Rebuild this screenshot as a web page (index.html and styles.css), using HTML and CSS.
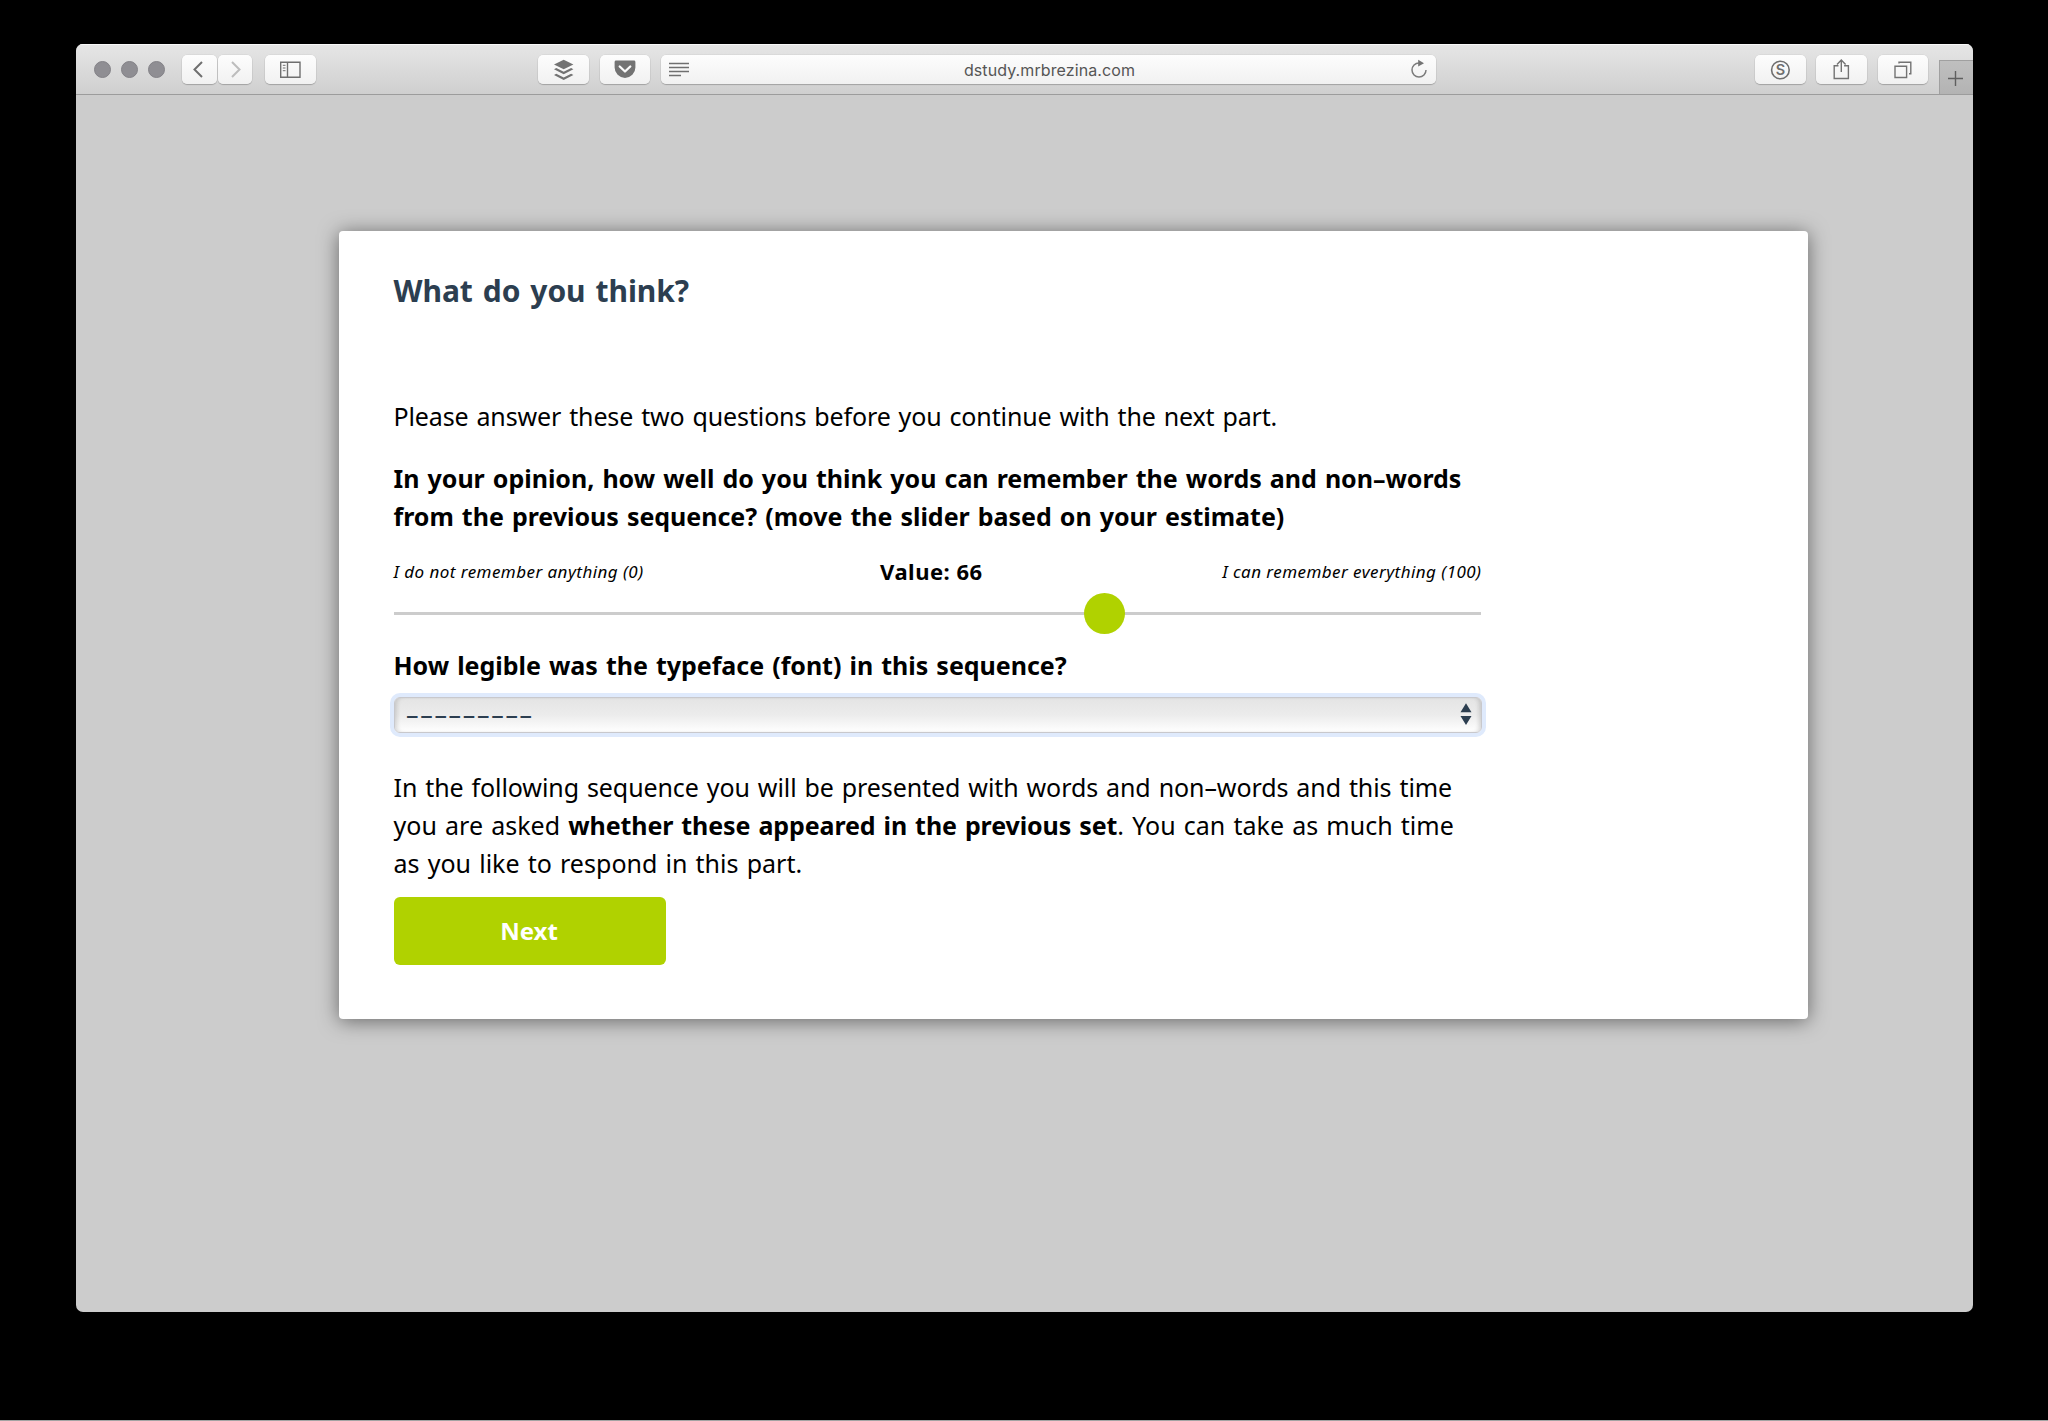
FILE: index.html
```html
<!DOCTYPE html>
<html lang="en">
<head>
<meta charset="utf-8">
<title>What do you think?</title>
<link rel="stylesheet" href="styles.css">
</head>
<body>
<div class="window">
  <header class="toolbar">
    <div class="lights"><i></i><i></i><i></i></div>
    <div class="nav">
      <button class="btn narrow back" aria-label="Back"><svg width="35" height="29" viewBox="0 0 35 29" fill="none" stroke="#6f6f6f" stroke-width="2"><path d="M20 7 12.5 14.5 20 22"/></svg></button>
      <button class="btn narrow" aria-label="Forward"><svg width="34" height="29" viewBox="0 0 34 29" fill="none" stroke="#bdbdbd" stroke-width="2"><path d="M14 7 21.500 14.500 14 22"/></svg></button>
    </div>
    <button class="btn sidebar" aria-label="Sidebar"><svg width="51" height="29" viewBox="0 0 51 29" fill="none" stroke="#6f6f6f" stroke-width="1.4"><path d="M15.700 7.200h19.300v15h-19.300zM22.500 7v15"/><path d="M17.800 10.300h2.700M17.800 13h2.700M17.800 15.700h2.700" stroke-width="1"/></svg></button>
    <button class="btn stack" aria-label="Buffer"><svg width="51" height="29" viewBox="0 0 51 29" fill="#737373"><path d="M25.700 4.800 35.400 9.400 25.700 14.200 16 9.400z"/><path d="M16 14.300 18.300 13.100 25.700 16.700 33.100 13.100 35.400 14.300 25.700 19.200z"/><path d="M16 20 18.300 18.800 25.700 22.400 33.100 18.800 35.400 20 25.700 24.900z"/></svg></button>
    <button class="btn pocket" aria-label="Pocket"><svg width="50" height="29" viewBox="0 0 50 29"><path d="M16 5.500h18q1.400 0 1.400 1.400v5.600a10.400 10.400 0 0 1-20.800 0v-5.600q0-1.400 1.400-1.400z" fill="#737373"/><path d="M19.700 11.500 25 16.500 30.300 11.500" fill="none" stroke="#fafafa" stroke-width="2.300" stroke-linecap="round" stroke-linejoin="round"/></svg></button>
    <div class="btn address">
      <svg class="reader" width="20" height="16" viewBox="0 0 20 16" stroke="#6f6f6f" stroke-width="1.300"><path d="M0 1.500h20M0 5.500h20M0 9.500h20M0 13.500h12"/></svg>
      <span>dstudy.mrbrezina.com</span>
      <svg class="reload" width="18" height="20" viewBox="0 0 18 20"><path d="M9 4A7 7 0 1 0 16 11" fill="none" stroke="#7c7c7c" stroke-width="1.500"/><path d="M8.200.8v6.600L14 4.200z" fill="#747474"/></svg>
    </div>
    <button class="btn ess" aria-label="Extension"><svg width="51" height="29" viewBox="0 0 51 29"><circle cx="25.400" cy="15" r="8.800" fill="none" stroke="#6f6f6f" stroke-width="1.600"/><text x="25.400" y="20.200" text-anchor="middle" class="glyph">S</text></svg></button>
    <button class="btn share" aria-label="Share"><svg width="51" height="29" viewBox="0 0 51 29" fill="none" stroke="#737373" stroke-width="1.400"><path d="M22.500 10.700h-4.300v12.800h14.200v-12.800h-4.300M25.300 17V5.500M21 9.500 25.300 5 29.600 9.500"/></svg></button>
    <button class="btn tabs" aria-label="Tabs"><svg width="50" height="29" viewBox="0 0 50 29" fill="none" stroke="#737373" stroke-width="1.400"><path d="M17 11.200h11.600v11.300h-11.600zM21 8.500v-1.300h11.800v11.600h-1.800"/></svg></button>
    <button class="newtab" aria-label="New tab"><svg width="33" height="34" viewBox="0 0 33 34" stroke="#5f5f5f" stroke-width="1.400"><path d="M8 17.500h15M15.500 10v15"/></svg></button>
  </header>
  <main class="card">
    <h1>What do you think?</h1>
    <p class="intro">Please answer these two questions before you continue with the next part.</p>
    <p class="question">In your opinion, how well do you think you can remember the words and non–words<br>from the previous sequence? (move the slider based on your estimate)</p>
    <div class="scale"><em>I do not remember anything (0)</em><strong>Value: 66</strong><em>I can remember everything (100)</em></div>
    <div class="slider"><div class="knob" style="left:66%"></div></div>
    <p class="question legible">How legible was the typeface (font) in this sequence?</p>
    <div class="select"><span>–––––––––</span><svg width="12" height="22" viewBox="0 0 12 22" fill="#2c3e50"><path d="M.5 9.300 6 .3 11.500 9.300zM.5 13 6 22 11.500 13z"/></svg></div>
    <p class="body"><span class="line">In the following sequence you will be presented with words and non–words and this time</span><br><span class="second">you are asked <b>whether these appeared in the previous set</b>. You can take as much time</span><br><span class="second">as you like to respond in this part.</span></p>
    <button class="next">Next</button>
  </main>
</div>
</body>
</html>
```
FILE: styles.css
```css
* { box-sizing: border-box; }
body {
  margin: 0;
  height: 1421px;
  padding: 44px 75px 0 76px;
  background: #000;
  border-bottom: 1px solid #a3a3a3;
  font-family: "Noto Sans", "Open Sans", sans-serif;
  color: #000;
  overflow: hidden;
}
button { border: 0; padding: 0; font: inherit; }
svg { display: block; flex: none; }
.window {
  height: 1268px;
  background: #ccc;
  border-radius: 7px;
  overflow: hidden;
}
.toolbar {
  height: 51px;
  display: flex;
  align-items: flex-start;
  padding-top: 11px;
  background: linear-gradient(#e6e6e6, #cfcfcf);
  border-bottom: 1px solid #9c9c9c;
  box-shadow: inset 0 1px 0 #f8f8f8;
}
.lights { display: flex; gap: 10.200px; margin: 6px 16.500px 0 17.500px; width: 72px; flex: none; }
.lights i { width: 17px; height: 17px; flex: none; border-radius: 50%; background: #8f8e93; border: 1px solid #838287; }
.btn {
  height: 29px;
  width: 51px;
  flex: none;
  border-radius: 5px;
  background: linear-gradient(#fdfdfd, #f1f1f1);
  box-shadow: 0 0 0 .5px rgba(0,0,0,.07), 0 1px 1px rgba(0,0,0,.2);
}
.nav { display: flex; gap: 1px; }
.narrow { width: 34px; }
.back { width: 35px; }
.sidebar { margin-left: 13px; }
.stack { margin-left: 222px; }
.pocket { width: 50px; margin-left: 11px; }
.address {
  width: 775px;
  margin-left: 11px;
  display: flex;
  align-items: center;
  justify-content: space-between;
  padding: 0 8px;
  font-family: Inter, sans-serif;
  font-size: 16px;
  letter-spacing: .1px;
  color: #555;
}
.address span { margin-top: 1px; }
.reader { margin-top: 1px; }
.reload { margin-top: -1px; }
.ess { margin-left: 319px; }
.glyph { font: 600 14.500px Inter, sans-serif; fill: #6f6f6f; }
.share { margin-left: 10px; }
.tabs { width: 50px; margin-left: 11px; }
.newtab {
  width: 34px;
  height: 34px;
  flex: none;
  margin: 5px 0 0 11px;
  background: linear-gradient(#bfbfbf, #b3b3b3);
  border: solid #a0a0a0;
  border-width: 1px 0 0 1px;
}
.card {
  width: 1469px;
  height: 788px;
  margin: 136px 0 0 263px;
  padding: 39px 0 0 54.500px;
  background: #fff;
  border-radius: 4px;
  box-shadow: 0 2px 20px rgba(0,0,0,.5);
}
h1, p { margin: 0; }
h1 { font-size: 30px; line-height: 42px; color: #2c3e50; letter-spacing: -.05px; word-spacing: 2.200px; }
p { font-size: 25px; line-height: 38px; word-spacing: 1.600px; white-space: nowrap; }
.intro { margin-top: 85px; letter-spacing: -.13px; }
.question { margin-top: 24px; font-weight: bold; letter-spacing: -.02px; }
.scale {
  width: 1088px;
  height: 38px;
  margin-top: 17px;
  display: flex;
  align-items: center;
  justify-content: space-between;
  line-height: 38px;
}
.scale em { font-size: 17px; letter-spacing: .45px; padding-top: 1px; }
.scale strong { font-size: 22px; letter-spacing: .5px; margin-left: -3px; }
.slider {
  position: relative;
  width: 1087px;
  height: 41px;
  margin-top: 3px;
  background: linear-gradient(#ccc, #ccc) 0 19px / 100% 3px no-repeat;
}
.knob {
  position: absolute;
  top: 0;
  width: 41px;
  height: 41px;
  margin-left: -27px;
  border-radius: 50%;
  background: #b0d200;
}
.legible { margin-top: 12px; }
.select {
  width: 1088px;
  height: 36px;
  margin-top: 13px;
  padding: 0 9px 2px 11.500px;
  display: flex;
  align-items: center;
  justify-content: space-between;
  font-size: 25px;
  line-height: 32px;
  letter-spacing: 1.700px;
  color: #2c3e50;
  border: 1px solid #c8c8cc;
  border-radius: 6px;
  background: linear-gradient(#e4e4e4, #ececec 50%, #fff);
  box-shadow: 0 0 0 4px #dfeafc, inset 4px 0 4px -2px rgba(0,0,0,.14), inset -4px 0 4px -2px rgba(0,0,0,.14);
}
.body { margin-top: 35px; }
.line { letter-spacing: -.09px; }
.second { letter-spacing: .02px; }
.second b { letter-spacing: -.09px; }
.next {
  display: block;
  width: 272px;
  height: 68px;
  margin-top: 15px;
  padding: 0 1px 2px 0;
  border-radius: 6px;
  background: #b0d200;
  color: #fff;
  font-size: 24px;
  font-weight: bold;
}
```
